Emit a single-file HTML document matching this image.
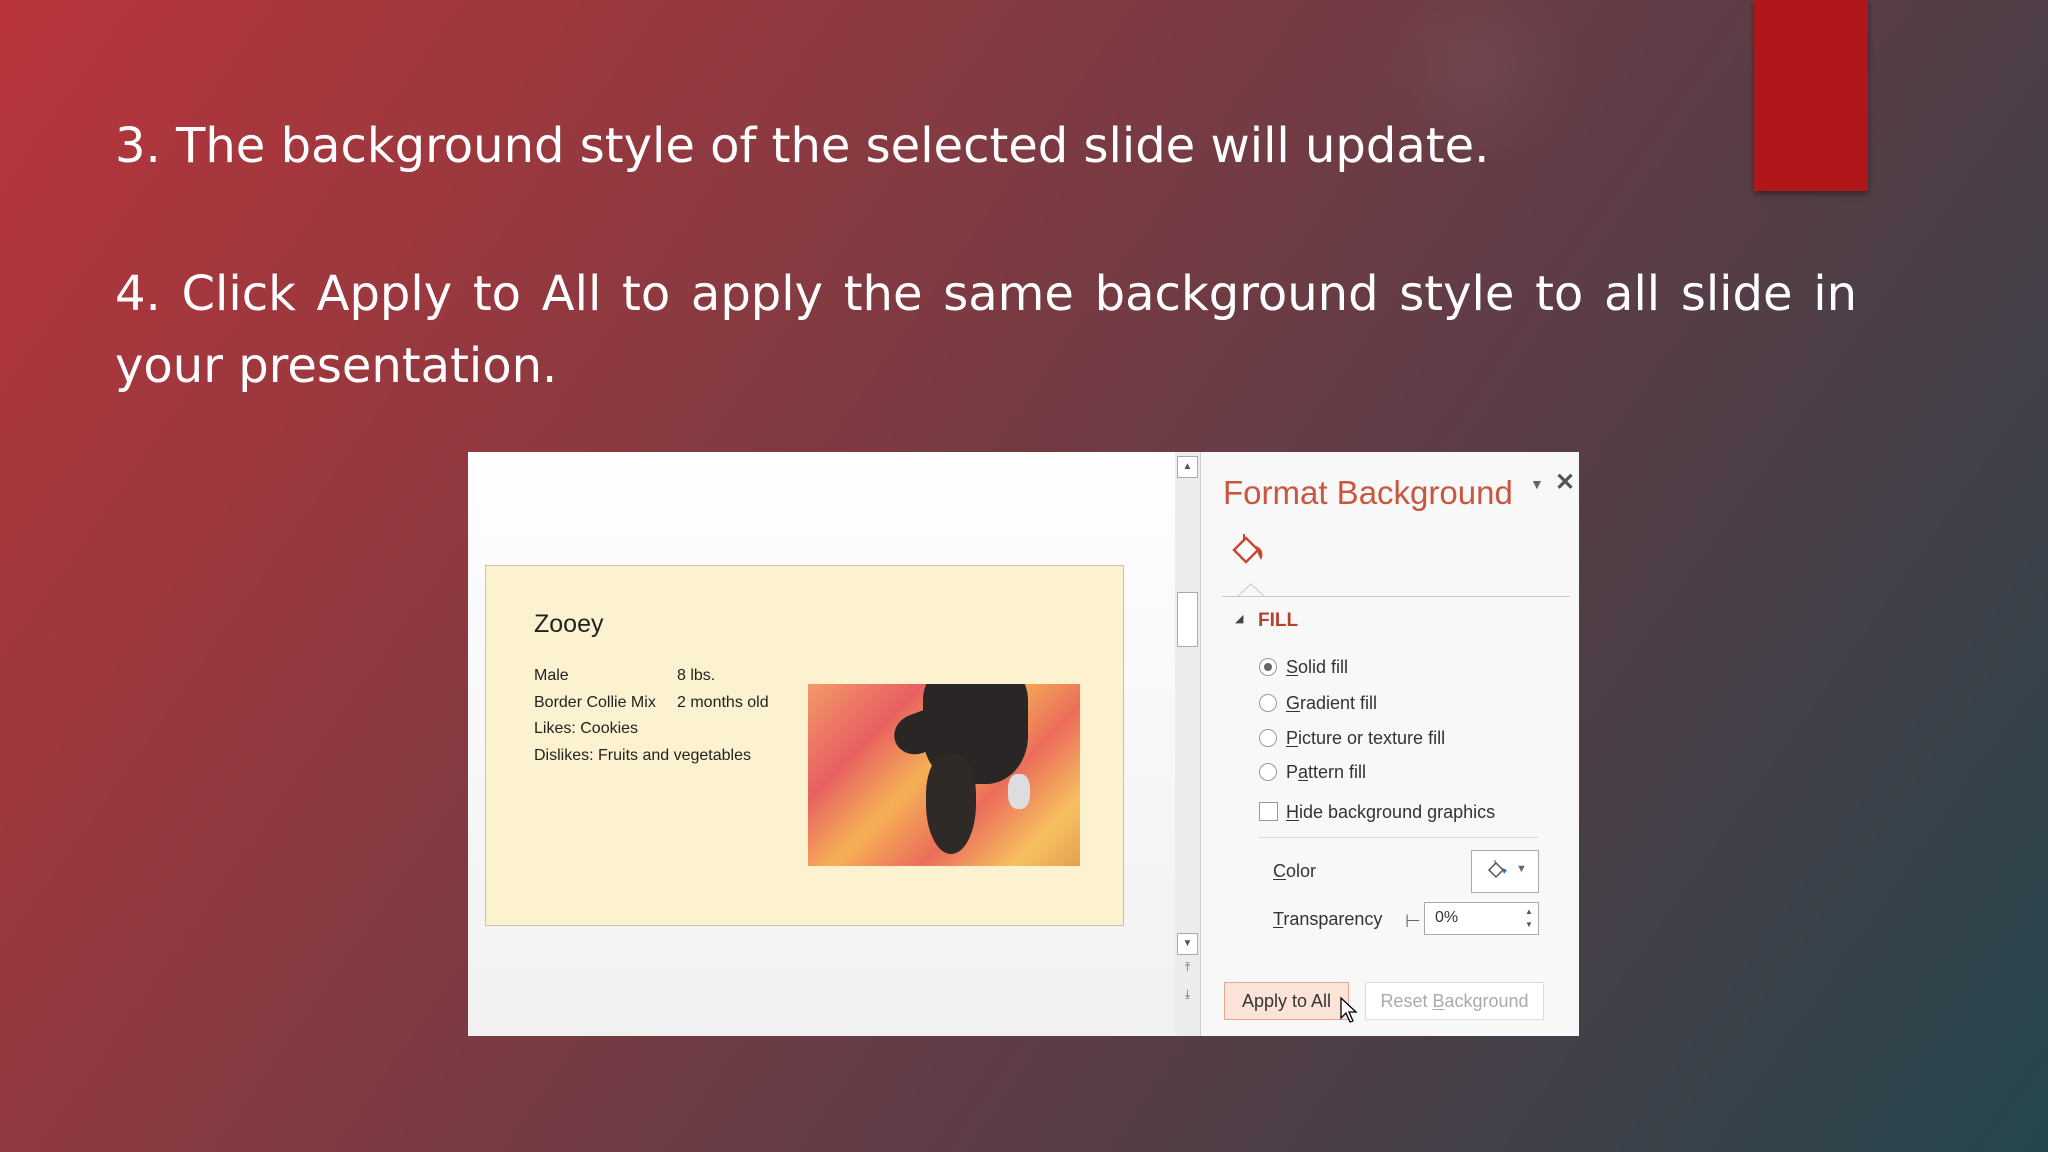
<!DOCTYPE html>
<html><head><meta charset="utf-8"><style>
*{margin:0;padding:0;box-sizing:border-box}
body{width:2048px;height:1152px;overflow:hidden;position:relative;font-family:"Liberation Sans",sans-serif;
background:linear-gradient(125deg,#b8353b 0%,#8e3940 30%,#673c45 55%,#4a3e48 75%,#25464d 100%);}
.glow{position:absolute;border-radius:50%;}
.t{position:absolute;color:#fff;font-size:48px;left:115px;font-family:"DejaVu Sans",sans-serif}
#red{position:absolute;left:1754px;top:0;width:114px;height:191px;background:#b0171a;box-shadow:0 3px 6px rgba(0,0,0,.4)}
#shot{position:absolute;left:468px;top:452px;width:1111px;height:584px;background:#f3f3f3;overflow:hidden}
.abs{position:absolute}
.u{text-decoration:underline;text-underline-offset:2px}
.radio{position:absolute;left:791px;width:18px;height:18px;border:1px solid #999;border-radius:50%;background:#fff}
.lbl{position:absolute;left:818px;font-size:18px;color:#333}
</style></head><body>
<div class="glow" style="left:1370px;top:-40px;width:210px;height:210px;background:radial-gradient(circle,rgba(255,255,255,.05),rgba(255,255,255,0) 70%)"></div>
<div class="t" style="top:118px;white-space:nowrap">3. The background style of the selected slide will update.</div>
<div class="t" style="top:258px;width:1742px;text-align:justify;text-align-last:left;line-height:72px">4. Click Apply to All to apply the same background style to all slide in your presentation.</div>
<div id="red"></div>

<div id="shot">
 <div class="abs" style="left:0;top:0;width:707px;height:584px;background:linear-gradient(#fff 0,#fafafa 30%,#f1f1f1 100%)"></div>
 <div class="abs" style="left:17px;top:113px;width:639px;height:361px;background:#fdf2cf;border:1px solid #c8c0b0">
  <div class="abs" style="left:48px;top:44px;font-size:25px;color:#222">Zooey</div>
  <div class="abs" style="left:48px;top:97px;font-size:16px;color:#222;line-height:26.5px">Male<br>Border Collie Mix<br>Likes: Cookies<br>Dislikes: Fruits and vegetables</div>
  <div class="abs" style="left:191px;top:97px;font-size:16px;color:#222;line-height:26.5px">8 lbs.<br>2 months old</div>
  <div class="abs" style="left:322px;top:118px;width:272px;height:182px;overflow:hidden;background:linear-gradient(135deg,#f29a6a,#e86060 25%,#f5b055 45%,#ec6d5b 65%,#f7c060 85%,#e5a050)">
   <div class="abs" style="left:115px;top:-20px;width:105px;height:120px;background:#2a2625;border-radius:30% 30% 40% 40%"></div>
   <div class="abs" style="left:86px;top:30px;width:45px;height:40px;background:#2a2625;border-radius:50% 10% 50% 50%;transform:rotate(-20deg)"></div>
   <div class="abs" style="left:118px;top:70px;width:50px;height:100px;background:#2f2a28;border-radius:40% 40% 50% 50%"></div>
   <div class="abs" style="left:200px;top:90px;width:22px;height:35px;background:#ddd;border-radius:40%"></div>
  </div>
 </div>
 <div class="abs" style="left:707px;top:0;width:25px;height:584px;background:#ececec"></div>
 <div class="abs" style="left:709px;top:4px;width:21px;height:22px;border:1px solid #aaa;background:#fff;font-size:10px;color:#555;text-align:center;line-height:20px">▲</div>
 <div class="abs" style="left:709px;top:140px;width:21px;height:55px;border:1px solid #aaa;background:#fff"></div>
 <div class="abs" style="left:709px;top:481px;width:21px;height:22px;border:1px solid #aaa;background:#fff;font-size:10px;color:#555;text-align:center;line-height:20px">▼</div>
 <div class="abs" style="left:709px;top:508px;width:21px;font-size:12px;color:#666;text-align:center;line-height:14px">⤒</div>
 <div class="abs" style="left:709px;top:535px;width:21px;font-size:12px;color:#666;text-align:center;line-height:14px">⤓</div>
 <div class="abs" style="left:732px;top:0;width:1px;height:584px;background:#d0d0d0"></div>
 <div class="abs" style="left:733px;top:0;width:378px;height:584px;background:#f8f8f8"></div>
 <div class="abs" style="left:755px;top:22px;font-size:33px;color:#c9573f">Format Background</div>
 <div class="abs" style="left:1062px;top:24px;font-size:14px;color:#666">▼</div>
 <div class="abs" style="left:1087px;top:16px;font-size:24px;color:#555;font-weight:bold">✕</div>
 <svg class="abs" style="left:762px;top:78px" width="40" height="40" viewBox="0 0 40 40"><path d="M4 20 L16 8 L28 20 L16 32 Z" fill="#fff" stroke="#c8482f" stroke-width="2.5"/><path d="M14 10 L14 4" stroke="#c8482f" stroke-width="2"/><path d="M26 16 C32 18 34 24 31 30 L28 24 Z" fill="#c8482f"/></svg>
 <div class="abs" style="left:754px;top:144px;width:348px;height:1px;background:#c8c8c8"></div>
 <svg class="abs" style="left:770px;top:131px" width="26" height="14"><path d="M0 13 L13 1 L26 13" fill="#f8f8f8" stroke="#c8c8c8"/></svg>
 <div class="abs" style="left:767px;top:160px;font-size:11px;color:#444">◢</div>
 <div class="abs" style="left:790px;top:158px;font-size:19px;font-weight:bold;color:#b7412d">FILL</div>
 <div class="radio" style="top:206px"></div><div class="abs" style="left:796px;top:211px;width:8px;height:8px;border-radius:50%;background:#666"></div>
 <div class="lbl" style="top:205px"><span class="u">S</span>olid fill</div>
 <div class="radio" style="top:242px"></div><div class="lbl" style="top:241px"><span class="u">G</span>radient fill</div>
 <div class="radio" style="top:277px"></div><div class="lbl" style="top:276px"><span class="u">P</span>icture or texture fill</div>
 <div class="radio" style="top:311px"></div><div class="lbl" style="top:310px">P<span class="u">a</span>ttern fill</div>
 <div class="abs" style="left:791px;top:350px;width:19px;height:19px;border:1px solid #999;background:#fff"></div>
 <div class="lbl" style="top:350px"><span class="u">H</span>ide background graphics</div>
 <div class="abs" style="left:790px;top:385px;width:280px;height:1px;background:#ddd"></div>
 <div class="lbl" style="left:805px;top:409px"><span class="u">C</span>olor</div>
 <div class="abs" style="left:1003px;top:398px;width:68px;height:43px;border:1px solid #aaa;background:#fff"></div>
 <svg class="abs" style="left:1018px;top:406px" width="24" height="24" viewBox="0 0 24 24"><path d="M3 12 L10 5 L17 12 L10 19 Z" fill="#fff" stroke="#555" stroke-width="1.5"/><path d="M9 6 V2" stroke="#555"/><path d="M16 10 L21 12 L18 16 Z" fill="#3a6ab0"/></svg>
 <div class="abs" style="left:1048px;top:411px;font-size:11px;color:#666">▼</div>
 <div class="lbl" style="left:805px;top:457px"><span class="u">T</span>ransparency</div>
 <div class="abs" style="left:937px;top:459px;font-size:18px;color:#666">⊢</div>
 <div class="abs" style="left:956px;top:450px;width:115px;height:33px;border:1px solid #aaa;background:#fff;font-size:16px;color:#333;padding:6px 10px">0%</div>
 <div class="abs" style="left:1057px;top:453px;font-size:8px;color:#555;line-height:13px">▲<br>▼</div>
 <div class="abs" style="left:756px;top:530px;width:125px;height:38px;border:1px solid #e8a890;background:#fbe3d8;font-size:18px;color:#333;text-align:center;line-height:36px">Apply to All</div>
 <svg class="abs" style="left:871px;top:544px" width="20" height="30" viewBox="0 0 20 30"><path d="M2 2 L2 22 L7 17 L11 26 L14 25 L10 16 L17 16 Z" fill="#fff" stroke="#000" stroke-width="1.3"/></svg>
 <div class="abs" style="left:897px;top:530px;width:179px;height:38px;border:1px solid #ddd;background:#fff;font-size:18px;color:#aaa;text-align:center;line-height:36px">Reset <span class="u">B</span>ackground</div>
</div>
</body></html>
